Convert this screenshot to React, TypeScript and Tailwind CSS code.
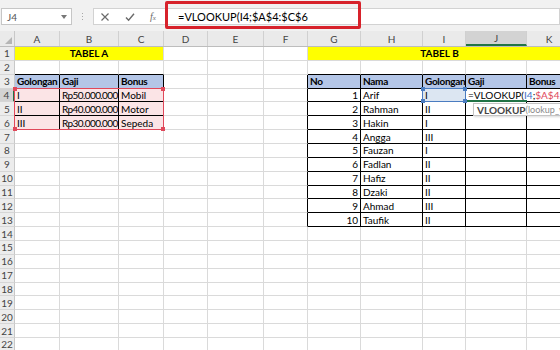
import React from "react";

const COLS =
  "grid grid-cols-[15px_45px_59px_45px_44px_56px_44px_53px_62px_43px_61px_45px_40px]";
const LETTERS = ["A", "B", "C", "D", "E", "F", "G", "H", "I", "J", "K", "L"];

const TABLE_A: [string, string, string][] = [
  ["I", "Rp50.000.000", "Mobil"],
  ["II", "Rp40.000.000", "Motor"],
  ["III", "Rp30.000.000", "Sepeda"],
];

const TABLE_B: [string, string, string][] = [
  ["1", "Arif", "I"],
  ["2", "Rahman", "II"],
  ["3", "Hakin", "I"],
  ["4", "Angga", "III"],
  ["5", "Fauzan", "I"],
  ["6", "Fadlan", "II"],
  ["7", "Hafiz", "II"],
  ["8", "Dzaki", "II"],
  ["9", "Ahmad", "III"],
  ["10", "Taufik", "II"],
];

const inA = (r: number, c: number) => r >= 3 && r <= 6 && c >= 1 && c <= 3;
const inB = (r: number, c: number) => r >= 3 && r <= 13 && c >= 7 && c <= 11;
const inT = (r: number, c: number) => inA(r, c) || inB(r, c);

type Cell = {
  c: number;
  span?: number;
  text?: React.ReactNode;
  bold?: boolean;
  title?: boolean;
  align?: "l" | "r" | "c";
  bg?: string;
  extra?: React.ReactNode;
  tight?: boolean;
};

const SPAN: Record<number, string> = { 1: "", 3: "col-span-3", 5: "col-span-5" };

function Corners({ color }: { color: string }) {
  return (
    <>
      <div className={`absolute -left-[2px] -top-[2px] h-[4px] w-[4px] ${color}`} />
      <div className={`absolute -right-[2px] -top-[2px] h-[4px] w-[4px] ${color}`} />
      <div className={`absolute -bottom-[2px] -left-[2px] h-[4px] w-[4px] ${color}`} />
      <div className={`absolute -bottom-[2px] -right-[2px] h-[4px] w-[4px] ${color}`} />
    </>
  );
}

function rowCells(r: number): Cell[] {
  if (r === 1) {
    return [
      { c: 1, span: 3, text: "TABEL A", title: true, align: "c", bg: "bg-[#ffff00]" },
      { c: 4 },
      { c: 5 },
      { c: 6 },
      { c: 7, span: 5, text: "TABEL B", title: true, align: "c", bg: "bg-[#ffff00]" },
      { c: 12 },
    ];
  }
  const cells: Cell[] = [];
  for (let c = 1; c <= 12; c++) {
    const cell: Cell = { c };
    if (r === 3 && c <= 3) {
      cell.text = ["Golongan", "Gaji", "Bonus"][c - 1];
      cell.bold = true;
      cell.bg = "bg-[#b4c6e7]";
    }
    if (r >= 4 && r <= 6 && c <= 3) {
      cell.text = TABLE_A[r - 4][c - 1];
      cell.bg = "bg-[#fbe4e6]";
      if (c === 2) cell.tight = true;
      if (r === 4 && c === 1) {
        cell.extra = (
          <div className="pointer-events-none absolute -left-px -top-px z-10 h-[42.58px] w-[150px] border border-[#e0485a]">
            <Corners color="bg-[#e0485a]" />
          </div>
        );
      }
    }
    if (r === 3 && c >= 7 && c <= 11) {
      cell.text = ["No", "Nama", "Golongan", "Gaji", "Bonus"][c - 7];
      cell.bold = true;
      cell.bg = "bg-[#b4c6e7]";
    }
    if (r >= 4 && r <= 13 && c >= 7 && c <= 9) {
      cell.text = TABLE_B[r - 4][c - 7];
      if (c === 7) cell.align = "r";
    }
    if (r === 4 && c === 9) {
      cell.bg = "bg-[#dce6f2]";
      cell.extra = (
        <div className="pointer-events-none absolute -left-px -top-px z-30 h-[14.86px] w-[44px] border border-[#4a7cc0]">
          <Corners color="bg-[#4a7cc0]" />
        </div>
      );
    }
    if (r === 4 && c === 10) {
      cell.extra = (
        <>
          <div className="absolute left-0 top-0 z-20 flex h-[12.86px] items-center whitespace-nowrap bg-white pl-[2px] pr-[40px] text-[10px]">
            <span>=VLOOKUP(</span>
            <span className="text-[#3f6fc6]">I4</span>
            <span>;</span>
            <span className="text-[#e0485a]">$A$4:$C$6</span>
          </div>
          <div className="absolute -bottom-px left-0 z-20 h-[2px] w-[61px] bg-[#217346]" />
          <div className="absolute left-[7px] top-[14.5px] z-30 flex h-[13px] items-center whitespace-nowrap border border-[#c4c4c4] bg-white pl-[3px] pr-[4px] shadow-[1px_1px_2px_rgba(0,0,0,0.15)]">
            <span className="text-[10px] font-bold text-[#444]">VLOOKUP</span>
            <span className="text-[9px] text-[#8a8a8a]">(lookup_value; table_array; col_index_num; [range_lookup])</span>
          </div>
        </>
      );
    }
    cells.push(cell);
  }
  return cells;
}

function Row({ r }: { r: number }) {
  const active = r === 4;
  return (
    <div className={`${COLS} h-[13.86px]`}>
      <div
        className={`flex items-center justify-center border-b border-b-[#d6d6d6] text-[#444] ${
          active
            ? "border-r-2 border-r-[#217346] bg-[#d3d3d3]"
            : "border-r border-r-[#c8c8c8] bg-[#ececec]"
        }`}
      >
        {r}
      </div>
      {rowCells(r).map((cell) => {
        const span = cell.span ?? 1;
        const last = cell.c + span - 1;
        const rightDark = inT(r, last) || inT(r, last + 1);
        let bottomDark = false;
        for (let k = cell.c; k <= last; k++) if (inT(r, k) || inT(r + 1, k)) bottomDark = true;
        const align =
          cell.align === "r" ? "justify-end" : cell.align === "c" ? "justify-center" : "justify-start";
        return (
          <div
            key={cell.c}
            className={`relative flex items-center whitespace-pre border-b border-r px-[2px] ${SPAN[span]} ${align} ${
              rightDark ? "border-r-black" : "border-r-[#dadada]"
            } ${bottomDark ? "border-b-black" : "border-b-[#dadada]"} ${cell.bg ?? "bg-white"} ${
              cell.bold ? "font-bold tracking-[-0.3px]" : ""
            } ${cell.title ? "font-bold" : ""} ${cell.tight ? "tracking-[-0.6px]" : ""}`}
          >
            {cell.text}
            {cell.extra}
          </div>
        );
      })}
    </div>
  );
}

function TopBar() {
  return (
    <div className="flex h-[31px] items-center bg-[#f1f1f1] pt-[2px]">
      <div className="ml-px flex h-[17px] w-[71px] items-center justify-between border border-[#c6c6c6] bg-white pl-[5px] pr-[4px] text-[10px] text-[#555]">
        <span>J4</span>
        <svg width="6" height="4" viewBox="0 0 6 4">
          <path d="M0 0h6L3 4z" fill="#777" />
        </svg>
      </div>
      <div className="ml-[9px] flex w-[3px] flex-col items-center gap-[2px]">
        <div className="h-px w-px bg-[#a8a8a8]" />
        <div className="h-px w-px bg-[#a8a8a8]" />
        <div className="h-px w-px bg-[#a8a8a8]" />
      </div>
      <div className="ml-[9px] flex h-[17px] flex-1 items-center border border-[#d2d2d2] bg-white">
        <div className="flex h-full w-[71px] items-center gap-[15px] pl-[6px]">
          <svg width="10" height="10" viewBox="0 0 10 10">
            <path d="M1.5 1.5l7 7M8.5 1.5l-7 7" stroke="#6a6a6a" strokeWidth="1.2" fill="none" />
          </svg>
          <svg width="10" height="10" viewBox="0 0 10 10">
            <path d="M1 5.5l2.6 2.8L9 1.8" stroke="#6a6a6a" strokeWidth="1.4" fill="none" />
          </svg>
          <span className="w-[10px] font-['Liberation_Serif',serif] text-[10px] italic text-[#6a6a6a]">
            f<span className="text-[7px]">x</span>
          </span>
        </div>
        <div className="relative flex h-full flex-1 items-center pl-[13px] text-[11px] text-black">
          <span>=VLOOKUP(I4;$A$4:$C$6</span>
          <div className="pointer-events-none absolute -top-[8px] left-0 h-[28px] w-[196px] rounded-[2px] border-[3px] border-[#d7222b]" />
        </div>
      </div>
    </div>
  );
}

function ColHeader() {
  return (
    <div className={`${COLS} h-[16px] border-b border-b-[#bdbdbd] bg-[#eaeaea] text-[10px] text-[#444]`}>
      <div className="relative border-r border-r-[#c8c8c8]">
        <svg className="absolute bottom-[2px] right-[2px]" width="7" height="7" viewBox="0 0 7 7">
          <path d="M7 0V7H0z" fill="#b5b5b5" />
        </svg>
      </div>
      {LETTERS.map((l) => (
        <div
          key={l}
          className={`flex items-center justify-center border-r border-r-[#d0d0d0] ${
            l === "J" ? "border-b-2 border-b-[#217346] bg-[#d3d3d3]" : ""
          }`}
        >
          {l}
        </div>
      ))}
    </div>
  );
}

export default function App() {
  const rows = Array.from({ length: 22 }, (_, i) => i + 1);
  return (
    <div className="h-[350px] w-[560px] overflow-hidden bg-white font-['Lato',sans-serif] text-[10px] leading-none text-black">
      <TopBar />
      <ColHeader />
      {rows.map((r) => (
        <Row key={r} r={r} />
      ))}
    </div>
  );
}
